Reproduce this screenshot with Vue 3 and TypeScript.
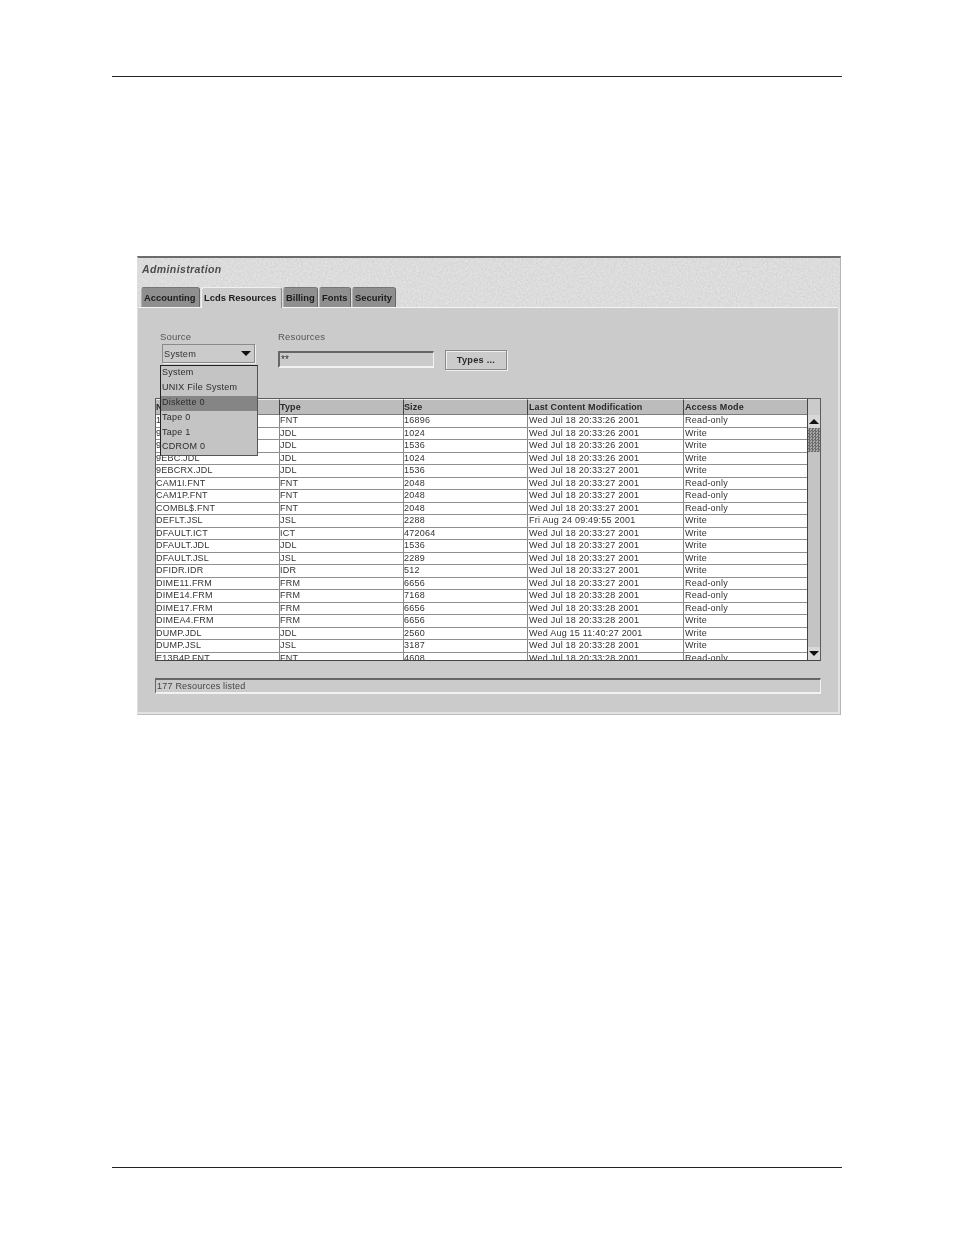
<script setup lang="ts">
interface Row { name: string; type: string; size: string; date: string; mode: string }
const tabs = [
  { label: 'Accounting', w: 59, active: false },
  { label: 'Lcds Resources', w: 81, active: true },
  { label: 'Billing', w: 35, active: false },
  { label: 'Fonts', w: 32, active: false },
  { label: 'Security', w: 44, active: false },
]
const options = ['System', 'UNIX File System', 'Diskette 0', 'Tape 0', 'Tape 1', 'CDROM 0']
const columns = ['Name', 'Type', 'Size', 'Last Content Modification', 'Access Mode']
const d26 = 'Wed Jul 18 20:33:26 2001'
const d27 = 'Wed Jul 18 20:33:27 2001'
const d28 = 'Wed Jul 18 20:33:28 2001'
const rows: Row[] = [
  { name: '1403.FNT', type: 'FNT', size: '16896', date: d26, mode: 'Read-only' },
  { name: '9EB.JDL', type: 'JDL', size: '1024', date: d26, mode: 'Write' },
  { name: '9EBA.JDL', type: 'JDL', size: '1536', date: d26, mode: 'Write' },
  { name: '9EBC.JDL', type: 'JDL', size: '1024', date: d26, mode: 'Write' },
  { name: '9EBCRX.JDL', type: 'JDL', size: '1536', date: d27, mode: 'Write' },
  { name: 'CAM1I.FNT', type: 'FNT', size: '2048', date: d27, mode: 'Read-only' },
  { name: 'CAM1P.FNT', type: 'FNT', size: '2048', date: d27, mode: 'Read-only' },
  { name: 'COMBL$.FNT', type: 'FNT', size: '2048', date: d27, mode: 'Read-only' },
  { name: 'DEFLT.JSL', type: 'JSL', size: '2288', date: 'Fri Aug 24 09:49:55 2001', mode: 'Write' },
  { name: 'DFAULT.ICT', type: 'ICT', size: '472064', date: d27, mode: 'Write' },
  { name: 'DFAULT.JDL', type: 'JDL', size: '1536', date: d27, mode: 'Write' },
  { name: 'DFAULT.JSL', type: 'JSL', size: '2289', date: d27, mode: 'Write' },
  { name: 'DFIDR.IDR', type: 'IDR', size: '512', date: d27, mode: 'Write' },
  { name: 'DIME11.FRM', type: 'FRM', size: '6656', date: d27, mode: 'Read-only' },
  { name: 'DIME14.FRM', type: 'FRM', size: '7168', date: d28, mode: 'Read-only' },
  { name: 'DIME17.FRM', type: 'FRM', size: '6656', date: d28, mode: 'Read-only' },
  { name: 'DIMEA4.FRM', type: 'FRM', size: '6656', date: d28, mode: 'Write' },
  { name: 'DUMP.JDL', type: 'JDL', size: '2560', date: 'Wed Aug 15 11:40:27 2001', mode: 'Write' },
  { name: 'DUMP.JSL', type: 'JSL', size: '3187', date: d28, mode: 'Write' },
  { name: 'E13B4P.FNT', type: 'FNT', size: '4608', date: d28, mode: 'Read-only' },
]
</script>

<template>
  <div class="page">
    <hr class="rule" />
    <section class="window">
      <header class="head">
        <svg class="noise" aria-hidden="true">
          <filter id="grain">
            <feTurbulence type="fractalNoise" baseFrequency="0.55" numOctaves="2" seed="4" />
            <feColorMatrix type="matrix" values="0 0 0 0 0.5  0 0 0 0 0.5  0 0 0 0 0.5  0.5 0.5 0 0 -0.32" />
          </filter>
          <rect width="100%" height="100%" filter="url(#grain)" />
        </svg>
        <h1 class="title">Administration</h1>
        <nav class="tabs">
          <div
            v-for="t in tabs"
            :key="t.label"
            class="tab"
            :class="{ active: t.active }"
            :style="{ width: t.w + 'px' }"
          >{{ t.label }}</div>
        </nav>
      </header>

      <main class="panel">
        <div class="controls">
          <div class="source">
            <label class="lbl">Source</label>
            <div class="combo">
              <span>System</span>
              <i class="caret"></i>
            </div>
            <ul class="menu">
              <li v-for="o in options" :key="o" :class="{ hi: o === 'Diskette 0' }">{{ o }}</li>
            </ul>
          </div>
          <div class="resources">
            <label class="lbl">Resources</label>
            <div class="input">**</div>
          </div>
          <button class="btn">Types ...</button>
        </div>

        <div class="table">
          <div class="thead">
            <div v-for="c in columns" :key="c" class="th">{{ c }}</div>
            <div class="corner"></div>
          </div>
          <div class="tbody">
            <div class="rows">
              <div v-for="r in rows" :key="r.name" class="tr">
                <div class="td">{{ r.name }}</div>
                <div class="td">{{ r.type }}</div>
                <div class="td">{{ r.size }}</div>
                <div class="td">{{ r.date }}</div>
                <div class="td">{{ r.mode }}</div>
              </div>
            </div>
            <div class="scroll">
              <div class="arrow"><i class="up"></i></div>
              <div class="thumb"></div>
              <div class="track"></div>
              <div class="arrow"><i class="down"></i></div>
            </div>
          </div>
        </div>

        <div class="status">177 Resources listed</div>
      </main>
    </section>
    <hr class="rule bottom" />
  </div>
</template>

<style>
html, body { margin: 0; background: #fff; }
</style>

<style scoped>
.page {
  width: 954px;
  height: 1235px;
  box-sizing: border-box;
  padding-top: 76px;
  overflow: hidden;
  font-family: "Liberation Sans", Arial, sans-serif;
  color: #222;
}
.rule {
  margin: 0 112px;
  border: 0;
  height: 1px;
  background: #222;
}
.rule.bottom { margin-top: 452px; }
.window {
  margin: 179px 113px 0 137px;
  height: 459px;
  box-sizing: border-box;
  border-top: 2px solid #6c6c6c;
  border-right: 1px solid #b5b5b5;
  border-bottom: 1px solid #bdbdbd;
  border-left: 1px solid #dedede;
  background: #e3e3e3;
  display: flex;
  flex-direction: column;
  padding-bottom: 2px;
  filter: blur(0.3px);
}
.head {
  position: relative;
  height: 50px;
  flex: none;
  padding-left: 4px;
  display: flex;
  flex-direction: column;
  justify-content: space-between;
}
.noise {
  position: absolute;
  inset: 0;
  width: 100%;
  height: 100%;
}
.title {
  position: relative;
  margin: 5px 0 0;
  font-size: 10.5px;
  line-height: 13px;
  font-weight: bold;
  font-style: italic;
  color: #4c4c4c;
  letter-spacing: 0.4px;
}
.tabs {
  position: relative;
  display: flex;
  gap: 1px;
  height: 20px;
  border-bottom: 1px solid #f4f4f4;
  margin-left: -4px;
  padding-left: 3px;
  margin-right: 2px;
}
.tab {
  box-sizing: border-box;
  height: 20px;
  background: #8f8f8f;
  border-top: 1px solid #767676;
  border-left: 1px solid #b0b0b0;
  border-right: 1px solid #666;
  border-radius: 3px 3px 0 0;
  padding-left: 2px;
  font-size: 9.4px;
  font-weight: bold;
  line-height: 19px;
  white-space: nowrap;
  color: #1c1c1c;
}
.tab.active {
  height: 21px;
  background: #cbcbcb;
  border-top-color: #f0f0f0;
  border-left-color: #f0f0f0;
  border-right-color: #888;
  position: relative;
  z-index: 1;
}
.panel {
  flex: 1;
  margin-right: 2px;
  background: #cbcbcb;
  padding: 0 17px 0 17px;
  display: flex;
  flex-direction: column;
}
.controls {
  position: relative;
  height: 90px;
  display: flex;
  flex: none;
}
.source {
  position: relative;
  margin-left: 5px;
  width: 118px;
  flex: none;
}
.lbl {
  display: block;
  margin-top: 22px;
  font-size: 9.5px;
  line-height: 13px;
  color: #555;
  letter-spacing: 0.2px;
}
.combo {
  position: relative;
  box-sizing: border-box;
  width: 93px;
  height: 19px;
  margin: 1px 0 0 2px;
  border: 1px solid #8a8a8a;
  box-shadow: 1px 1px 0 #efefef;
  padding-left: 1px;
  display: flex;
  align-items: center;
  justify-content: space-between;
  font-size: 9.2px;
  letter-spacing: 0.25px;
  color: #333;
}
.caret {
  width: 0;
  height: 0;
  margin-right: 3px;
  border-left: 5px solid transparent;
  border-right: 5px solid transparent;
  border-top: 5px solid #111;
}
.menu {
  position: absolute;
  left: 0;
  top: 57px;
  z-index: 5;
  box-sizing: border-box;
  width: 98px;
  height: 91px;
  margin: 0;
  padding: 0;
  list-style: none;
  background: #c4c4c4;
  border: 1px solid #222;
  border-right-color: #555;
  border-bottom-color: #555;
}
.menu li {
  height: 14.9px;
  line-height: 13.4px;
  padding-left: 1px;
  font-size: 9px;
  letter-spacing: 0.27px;
  color: #2c2c2c;
  white-space: nowrap;
}
.menu li.hi { background: #858585; }
.resources {
  width: 156px;
  flex: none;
  margin-left: 0;
}
.input {
  box-sizing: border-box;
  width: 156px;
  height: 17px;
  margin-top: 8px;
  background: #cbcbcb;
  border-top: 2px solid #666;
  border-left: 2px solid #666;
  border-right: 1px solid #f2f2f2;
  border-bottom: 2px solid #f2f2f2;
  font-size: 10px;
  line-height: 14px;
  padding-left: 1px;
  color: #333;
}
.btn {
  box-sizing: border-box;
  width: 62px;
  height: 20px;
  margin: 42px 0 0 11px;
  background: #cbcbcb;
  border: 1px solid #8a8a8a;
  box-shadow: inset 1px 1px 0 #efefef, 1px 1px 0 #efefef;
  padding: 0;
  font-family: inherit;
  font-size: 9.2px;
  font-weight: bold;
  letter-spacing: 0.25px;
  color: #2a2a2a;
}
.table {
  position: relative;
  box-sizing: border-box;
  width: 666px;
  height: 263px;
  flex: none;
  border: 1px solid #5c5c5c;
  border-bottom-color: #444;
  overflow: hidden;
}
.thead {
  height: 16px;
  display: grid;
  grid-template-columns: 123px 124px 124px 156px 124px 1fr;
}
.th {
  box-sizing: border-box;
  background: #bcbcbc;
  border-top: 1px solid #eee;
  border-left: 1px solid #444;
  border-bottom: 2px solid #7c7c7c;
  padding-left: 1px;
  font-size: 9px;
  font-weight: bold;
  line-height: 14px;
  letter-spacing: 0.12px;
  color: #2a2a2a;
  white-space: nowrap;
}
.th:nth-child(-n+3) { padding-left: 0; }
.th:first-child { border-left: 0; }
.corner { background: #cbcbcb; border-left: 1px solid #444; }
.tbody {
  display: flex;
  height: 245px;
  overflow: hidden;
}
.rows { width: 651px; flex: none; background: #fff; }
.tr {
  height: 12.5px;
  box-sizing: border-box;
  display: grid;
  grid-template-columns: 123px 124px 124px 156px 124px;
  border-bottom: 1px solid #8f8f8f;
}
.td {
  box-sizing: border-box;
  border-left: 1px solid #888;
  padding-left: 1px;
  font-size: 9px;
  line-height: 11.4px;
  letter-spacing: 0.22px;
  color: #333;
  white-space: nowrap;
  overflow: hidden;
}
.td:nth-child(-n+3) { padding-left: 0; }
.td:first-child { border-left: 0; }
.scroll {
  flex: 1;
  display: flex;
  flex-direction: column;
  border-left: 1px solid #444;
  background: #c4c4c4;
}
.arrow {
  height: 13px;
  flex: none;
  background: #d8d8d8;
  display: flex;
  align-items: center;
  justify-content: center;
}
.up, .down {
  width: 0;
  height: 0;
  border-left: 5px solid transparent;
  border-right: 5px solid transparent;
}
.up { border-bottom: 5px solid #111; }
.down { border-top: 5px solid #111; }
.thumb {
  height: 24px;
  flex: none;
  background-color: #7a7a7a;
  background-image: repeating-conic-gradient(#6c6c6c 0 25%, #a8a8a8 0 50%);
  background-size: 3px 3px;
}
.track { flex: 1; }
.status {
  box-sizing: border-box;
  width: 666px;
  height: 16px;
  margin-top: 17px;
  flex: none;
  border-top: 2px solid #666;
  border-left: 1px solid #666;
  border-right: 1px solid #f2f2f2;
  border-bottom: 2px solid #f2f2f2;
  padding-left: 1px;
  font-size: 9px;
  line-height: 12px;
  letter-spacing: 0.22px;
  color: #444;
}
</style>
